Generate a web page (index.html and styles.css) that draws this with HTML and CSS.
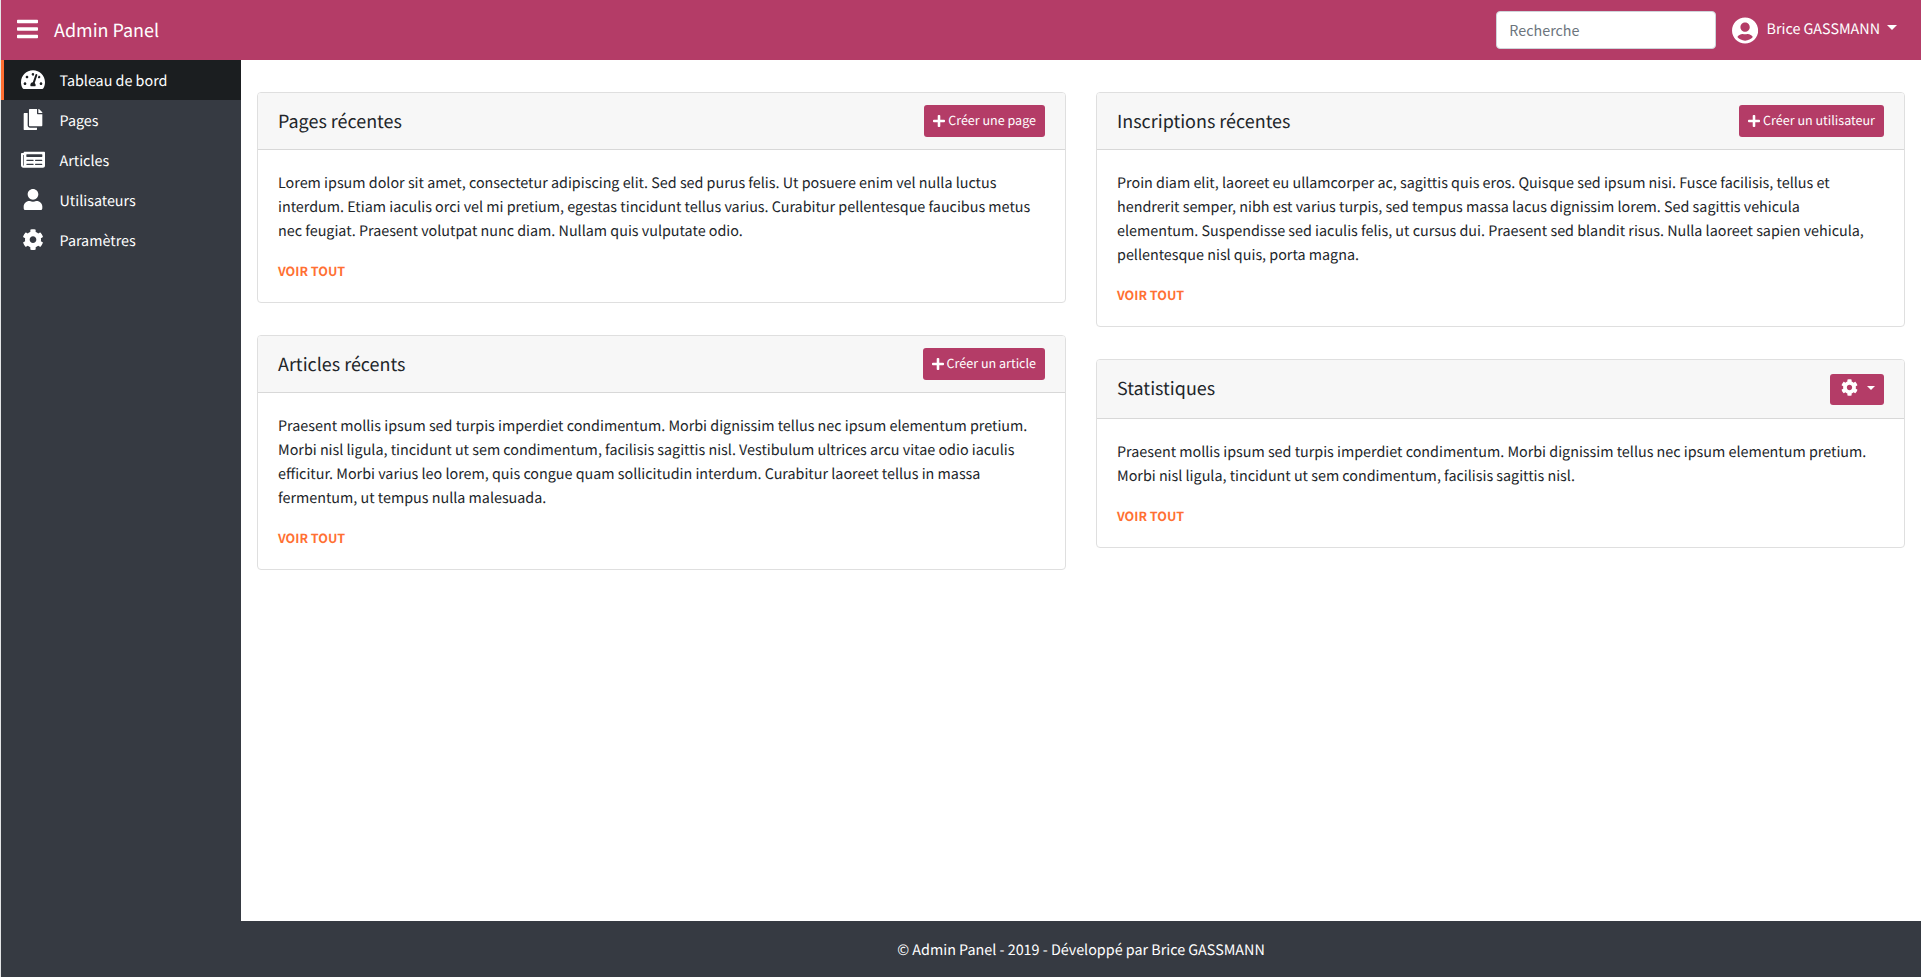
FILE: index.html
```html
<!DOCTYPE html>
<html lang="fr">
<head>
<meta charset="utf-8">
<title>Admin Panel</title>
<link rel="stylesheet" href="styles.css">
</head>
<body>
<svg class="sprite" aria-hidden="true">
  <symbol id="bars" viewBox="0 0 448 512"><path d="M16 132h416c8.837 0 16-7.163 16-16V76c0-8.837-7.163-16-16-16H16C7.163 60 0 67.163 0 76v40c0 8.837 7.163 16 16 16zm0 160h416c8.837 0 16-7.163 16-16v-40c0-8.837-7.163-16-16-16H16c-8.837 0-16 7.163-16 16v40c0 8.837 7.163 16 16 16zm0 160h416c8.837 0 16-7.163 16-16v-40c0-8.837-7.163-16-16-16H16c-8.837 0-16 7.163-16 16v40c0 8.837 7.163 16 16 16z"/></symbol>
  <symbol id="gauge" viewBox="0 0 576 512"><path d="M288 32C128.94 32 0 160.94 0 320c0 52.8 14.25 102.26 39.06 144.8 5.61 9.62 16.3 15.2 27.44 15.2h443c11.14 0 21.83-5.58 27.44-15.2C561.75 422.26 576 372.8 576 320c0-159.06-128.94-288-288-288zm0 64c14.71 0 26.58 10.13 30.32 23.65-1.11 2.26-2.64 4.23-3.45 6.67l-9.22 27.67c-5.13 3.49-10.97 6.01-17.64 6.01-17.67 0-32-14.33-32-32S270.33 96 288 96zM96 384c-17.67 0-32-14.33-32-32s14.33-32 32-32 32 14.33 32 32-14.33 32-32 32zm48-160c-17.67 0-32-14.33-32-32s14.33-32 32-32 32 14.33 32 32-14.33 32-32 32zm246.77-72.41l-61.33 184C343.13 347.33 352 364.54 352 384c0 11.72-3.38 22.55-8.88 32H232.88c-5.5-9.45-8.88-20.28-8.88-32 0-33.94 26.5-61.43 59.9-63.59l61.34-184.01c4.17-12.56 17.73-19.45 30.36-15.17 12.57 4.19 19.35 17.79 15.17 30.36zm14.66 57.2l15.52-46.55c3.47-1.29 7.13-2.23 11.05-2.23 17.67 0 32 14.33 32 32s-14.33 32-32 32c-11.38-.01-20.89-6.28-26.57-15.22zM480 384c-17.67 0-32-14.33-32-32s14.33-32 32-32 32 14.33 32 32-14.33 32-32 32z"/></symbol>
  <symbol id="copy" viewBox="0 0 448 512"><path d="M320 448v40c0 13.255-10.745 24-24 24H24c-13.255 0-24-10.745-24-24V120c0-13.255 10.745-24 24-24h72v296c0 30.879 25.121 56 56 56h168zm0-344V0H152c-13.255 0-24 10.745-24 24v368c0 13.255 10.745 24 24 24h272c13.255 0 24-10.745 24-24V128H344c-13.2 0-24-10.8-24-24zm120.971-31.029L375.029 7.029A24 24 0 0 0 358.059 0H352v96h96v-6.059a24 24 0 0 0-7.029-16.97z"/></symbol>
  <symbol id="newspaper" viewBox="0 0 576 512"><path d="M552 64H88c-13.255 0-24 10.745-24 24v8H24c-13.255 0-24 10.745-24 24v272c0 30.928 25.072 56 56 56h472c26.510 0 48-21.490 48-48V88c0-13.255-10.745-24-24-24zM56 400a8 8 0 0 1-8-8V144h16v248a8 8 0 0 1-8 8zm236-16H140c-6.627 0-12-5.373-12-12v-8c0-6.627 5.373-12 12-12h152c6.627 0 12 5.373 12 12v8c0 6.627-5.373 12-12 12zm208 0H348c-6.627 0-12-5.373-12-12v-8c0-6.627 5.373-12 12-12h152c6.627 0 12 5.373 12 12v8c0 6.627-5.373 12-12 12zm-208-96H140c-6.627 0-12-5.373-12-12v-8c0-6.627 5.373-12 12-12h152c6.627 0 12 5.373 12 12v8c0 6.627-5.373 12-12 12zm208 0H348c-6.627 0-12-5.373-12-12v-8c0-6.627 5.373-12 12-12h152c6.627 0 12 5.373 12 12v8c0 6.627-5.373 12-12 12zm0-96H140c-6.627 0-12-5.373-12-12v-40c0-6.627 5.373-12 12-12h360c6.627 0 12 5.373 12 12v40c0 6.627-5.373 12-12 12z"/></symbol>
  <symbol id="user" viewBox="0 0 448 512"><path d="M224 256c70.7 0 128-57.3 128-128S294.7 0 224 0 96 57.3 96 128s57.3 128 128 128zm89.6 32h-16.7c-22.2 10.2-46.9 16-72.9 16s-50.600-5.800-72.900-16h-16.700C60.200 288 0 348.200 0 422.400V464c0 26.500 21.500 48 48 48h352c26.500 0 48-21.500 48-48v-41.600c0-74.200-60.200-134.400-134.400-134.400z"/></symbol>
  <symbol id="cog" viewBox="0 0 512 512"><path d="M487.400 315.700l-42.600-24.600c4.300-23.200 4.300-47 0-70.200l42.600-24.600c4.900-2.800 7.100-8.600 5.500-14-11.100-35.600-30-67.800-54.700-94.600-3.800-4.100-10-5.100-14.800-2.300L380.800 110c-17.900-15.400-38.500-27.300-60.800-35.100V25.800c0-5.600-3.900-10.500-9.400-11.700-36.700-8.200-74.300-7.800-109.200 0-5.500 1.200-9.400 6.100-9.400 11.700V75c-22.200 7.900-42.800 19.800-60.800 35.100L88.700 85.500c-4.900-2.800-11-1.900-14.800 2.300-24.700 26.700-43.600 58.900-54.700 94.600-1.700 5.400.6 11.200 5.500 14L67.300 221c-4.300 23.200-4.300 47 0 70.200l-42.600 24.600c-4.900 2.800-7.100 8.600-5.500 14 11.100 35.600 30 67.800 54.700 94.600 3.800 4.100 10 5.100 14.800 2.300l42.600-24.600c17.900 15.400 38.500 27.300 60.800 35.100v49.200c0 5.600 3.900 10.500 9.400 11.700 36.700 8.200 74.300 7.800 109.200 0 5.500-1.200 9.400-6.100 9.400-11.700v-49.200c22.200-7.900 42.800-19.800 60.800-35.100l42.600 24.600c4.900 2.800 11 1.900 14.800-2.300 24.700-26.700 43.600-58.900 54.700-94.600 1.500-5.500-.7-11.300-5.600-14.100zM256 336c-44.100 0-80-35.900-80-80s35.900-80 80-80 80 35.900 80 80-35.900 80-80 80z"/></symbol>
  <symbol id="user-circle" viewBox="0 0 496 512"><path d="M248 8C111 8 0 119 0 256s111 248 248 248 248-111 248-248S385 8 248 8zm0 96c48.600 0 88 39.400 88 88s-39.400 88-88 88-88-39.400-88-88 39.400-88 88-88zm0 344c-58.700 0-111.300-26.600-146.500-68.200 18.800-35.400 55.600-59.800 98.500-59.800 2.400 0 4.800.4 7.100 1.100 13 4.200 26.600 6.900 40.900 6.900 14.300 0 28-2.700 40.900-6.900 2.300-.7 4.700-1.100 7.100-1.100 42.900 0 79.700 24.400 98.500 59.800C359.300 421.400 306.700 448 248 448z"/></symbol>
  <symbol id="plus" viewBox="0 0 448 512"><path d="M416 208H272V64c0-17.670-14.330-32-32-32h-32c-17.670 0-32 14.330-32 32v144H32c-17.670 0-32 14.330-32 32v32c0 17.670 14.330 32 32 32h144v144c0 17.670 14.330 32 32 32h32c17.670 0 32-14.330 32-32V304h144c17.670 0 32-14.330 32-32v-32c0-17.670-14.330-32-32-32z"/></symbol>
</svg>

<header class="topbar">
  <svg class="icon-bars"><use href="#bars"/></svg>
  <span class="brand">Admin Panel</span>
  <input class="search" type="text" placeholder="Recherche">
  <svg class="icon-account"><use href="#user-circle"/></svg>
  <span class="account">Brice GASSMANN</span>
  <span class="caret caret-account"></span>
</header>

<div class="layout">
  <nav class="sidebar">
    <a class="nav-item active"><svg class="nav-icon"><use href="#gauge"/></svg>Tableau de bord</a>
    <a class="nav-item"><svg class="nav-icon"><use href="#copy"/></svg>Pages</a>
    <a class="nav-item"><svg class="nav-icon"><use href="#newspaper"/></svg>Articles</a>
    <a class="nav-item"><svg class="nav-icon"><use href="#user"/></svg>Utilisateurs</a>
    <a class="nav-item"><svg class="nav-icon"><use href="#cog"/></svg>Paramètres</a>
  </nav>
  <div class="content">
    <main class="columns">
      <div class="column">
        <section class="card">
          <div class="card-header"><h2>Pages récentes</h2><a class="btn"><svg class="icon-plus"><use href="#plus"/></svg>Créer une page</a></div>
          <div class="card-body">
            <p>Lorem ipsum dolor sit amet, consectetur adipiscing elit. Sed sed purus felis. Ut posuere enim vel nulla luctus interdum. Etiam iaculis orci vel mi pretium, egestas tincidunt tellus varius. Curabitur pellentesque faucibus metus nec feugiat. Praesent volutpat nunc diam. Nullam quis vulputate odio.</p>
            <a class="more">VOIR TOUT</a>
          </div>
        </section>
        <section class="card">
          <div class="card-header"><h2>Articles récents</h2><a class="btn"><svg class="icon-plus"><use href="#plus"/></svg>Créer un article</a></div>
          <div class="card-body">
            <p>Praesent mollis ipsum sed turpis imperdiet condimentum. Morbi dignissim tellus nec ipsum elementum pretium. Morbi nisl ligula, tincidunt ut sem condimentum, facilisis sagittis nisl. Vestibulum ultrices arcu vitae odio iaculis efficitur. Morbi varius leo lorem, quis congue quam sollicitudin interdum. Curabitur laoreet tellus in massa fermentum, ut tempus nulla malesuada.</p>
            <a class="more">VOIR TOUT</a>
          </div>
        </section>
      </div>
      <div class="column">
        <section class="card">
          <div class="card-header"><h2>Inscriptions récentes</h2><a class="btn"><svg class="icon-plus"><use href="#plus"/></svg>Créer un utilisateur</a></div>
          <div class="card-body">
            <p>Proin diam elit, laoreet eu ullamcorper ac, sagittis quis eros. Quisque sed ipsum nisi. Fusce facilisis, tellus et hendrerit semper, nibh est varius turpis, sed tempus massa lacus dignissim lorem. Sed sagittis vehicula elementum. Suspendisse sed iaculis felis, ut cursus dui. Praesent sed blandit risus. Nulla laoreet sapien vehicula, pellentesque nisl quis, porta magna.</p>
            <a class="more">VOIR TOUT</a>
          </div>
        </section>
        <section class="card">
          <div class="card-header card-header-menu"><h2>Statistiques</h2><a class="btn btn-menu"><svg class="icon-cog"><use href="#cog"/></svg><span class="caret caret-small"></span></a></div>
          <div class="card-body">
            <p>Praesent mollis ipsum sed turpis imperdiet condimentum. Morbi dignissim tellus nec ipsum elementum pretium. Morbi nisl ligula, tincidunt ut sem condimentum, facilisis sagittis nisl.</p>
            <a class="more">VOIR TOUT</a>
          </div>
        </section>
      </div>
    </main>
    <footer class="footer">© Admin Panel - 2019 - Développé par Brice GASSMANN</footer>
  </div>
</div>
</body>
</html>
```
FILE: styles.css
```css
* { box-sizing: border-box; }

body {
  margin: 0;
  height: 977px;
  display: flex;
  flex-direction: column;
  border-left: 1px solid #e4e5e6;
  background: #fff;
  color: #212529;
  font: 14.34px/24px "Noto Sans CJK JP", "Noto Sans CJK SC", sans-serif;
  text-rendering: geometricPrecision;
  overflow: hidden;
}

svg { display: block; flex: none; fill: #fff; }
.sprite { position: absolute; width: 0; height: 0; }

.topbar {
  flex: none;
  height: 60px;
  display: flex;
  align-items: center;
  padding: 0 24px 0 16px;
  background: #b43c67;
  color: #fff;
}
.icon-bars { width: 21px; height: 24px; margin-bottom: 2px; }
.brand { margin-left: 16px; font-size: 17.94px; line-height: 30px; }
.search {
  width: 220px;
  height: 38px;
  margin-left: auto;
  padding: 5px 12px 7px;
  border: 1px solid #ced4da;
  border-radius: 4px;
  font: inherit;
}
.search::placeholder { color: #6c757d; opacity: 1; }
.icon-account { width: 26.2px; height: 27px; margin-left: 16px; }
.account { margin: 0 0 3px 8px; }

.caret {
  border-top: 5px solid #fff;
  border-left: 5px solid transparent;
  border-right: 5px solid transparent;
}
.caret-account { margin: 0 0 5px 7px; }
.caret-small { border-width: 4px 4px 0; margin-left: 7px; }

.layout { flex: 1; display: flex; min-height: 0; }
.sidebar { width: 240px; flex: none; background: #363a42; }
.nav-item {
  height: 40px;
  display: flex;
  align-items: center;
  gap: 14.5px;
  padding: 2px 0 0 17px;
  border-left: 3px solid transparent;
  color: #fff;
}
.nav-item.active { background: #1b1e20; border-color: #ff6f31; }
.nav-icon { width: 24px; height: 21.33px; margin-bottom: 3px; }

.content { flex: 1; display: flex; flex-direction: column; }
.columns {
  flex: 1;
  display: grid;
  grid-template-columns: 1fr 1fr;
  gap: 30px;
  padding: 32px 16px;
}
.column { display: flex; flex-direction: column; gap: 32px; }

.card { border: 1px solid #dfdfdf; border-radius: 4px; }
.card-header {
  height: 57px;
  display: flex;
  justify-content: space-between;
  align-items: center;
  padding: 0 20px;
  border-bottom: 1px solid #d8d8d8;
  border-radius: 3px 3px 0 0;
  background: #f7f7f7;
}
.card-header-menu { height: 59px; }
.card-header h2 { margin: 0; font-size: 17.94px; line-height: 24px; font-weight: 400; }
.card-header-menu h2 { margin-bottom: 2px; }
.btn {
  height: 32px;
  display: flex;
  align-items: center;
  padding: 0 9px 3px;
  border-radius: 3px;
  background: #b43c67;
  color: #fff;
  font-size: 12.56px;
  line-height: 21px;
}
.icon-plus { width: 12px; height: 14px; margin: 2px 3px 0 0; }
.btn-menu { height: 31px; }
.icon-cog { width: 21px; height: 17px; }

.card-body { padding: 21px 20px 19px; }
.card-body p { margin: 0 0 16px; }
.more { display: block; color: #ff7033; font-size: 12.56px; line-height: 24px; font-weight: 700; }

.footer {
  flex: none;
  height: 56px;
  background: #363a42;
  color: #fff;
  line-height: 57px;
  text-align: center;
}
```
